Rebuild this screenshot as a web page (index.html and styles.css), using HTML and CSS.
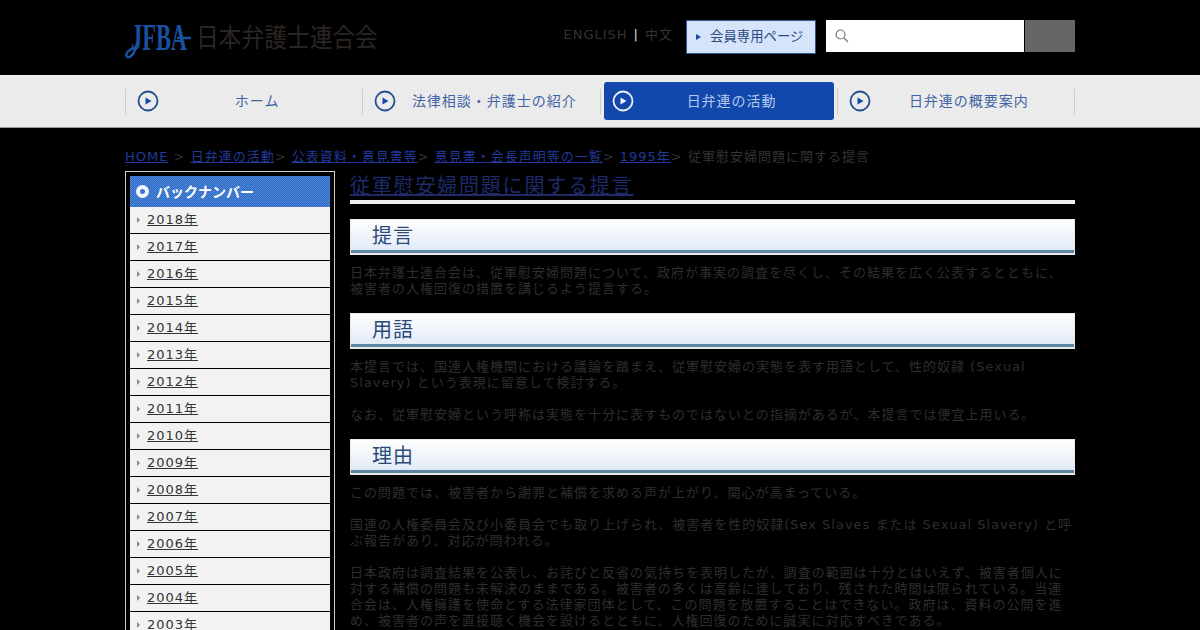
FILE: index.html
```html
<!DOCTYPE html>
<html lang="ja">
<head>
    <meta charset="UTF-8">
    <meta name="viewport" content="width=device-width, initial-scale=1.0">
    <title>従軍慰安婦問題に関する提言 | 日本弁護士連合会</title>
    <link rel="stylesheet" href="styles.css">
</head>
<body>
    <header class="top">
        <div class="wrap top-inner">
            <a class="logo" href="#">
                <svg width="254" height="40" viewBox="0 0 254 40">
                    <path class="logo-tail" d="M13 20 L10 29 C8 35 3 38 1.500 35 C0 32 5 28 11 26"/>
                    <path class="logo-bar" d="M52 17 L66 17"/>
                    <text class="logo-mark" transform="translate(6 29) scale(.59 1)">JFBA</text>
                    <text class="logo-name" transform="translate(71 26) scale(.875 1)">日本弁護士連合会</text>
                </svg>
            </a>
            <div class="lang"><a href="#">ENGLISH</a><span class="lang-sep">|</span><a href="#">中文</a></div>
            <a class="member" href="#"><span class="member-arrow"></span>会員専用ページ</a>
            <form class="search">
                <div class="search-box">
                    <svg width="14" height="14" viewBox="0 0 14 14">
                        <circle class="search-icon" cx="5.500" cy="5.500" r="4.500"/>
                        <path class="search-icon" d="M9 9 L13 13"/>
                    </svg>
                </div>
                <button class="search-btn" type="button"></button>
            </form>
        </div>
    </header>

    <nav class="gnav">
        <div class="wrap gnav-row">
            <span class="gnav-sep"></span>
            <a class="gnav-item" href="#">
                <svg class="play" width="22" height="22" viewBox="0 0 22 22"><circle cx="11" cy="11" r="9.500"/><path d="M8.500 7.500 L14.500 11 L8.500 14.500 Z"/></svg>
                <span class="gnav-text">ホーム</span>
            </a>
            <span class="gnav-sep"></span>
            <a class="gnav-item" href="#">
                <svg class="play" width="22" height="22" viewBox="0 0 22 22"><circle cx="11" cy="11" r="9.500"/><path d="M8.500 7.500 L14.500 11 L8.500 14.500 Z"/></svg>
                <span class="gnav-text">法律相談・弁護士の紹介</span>
            </a>
            <span class="gnav-sep"></span>
            <a class="gnav-item active" href="#">
                <svg class="play" width="22" height="22" viewBox="0 0 22 22"><circle cx="11" cy="11" r="9.500"/><path d="M8.500 7.500 L14.500 11 L8.500 14.500 Z"/></svg>
                <span class="gnav-text">日弁連の活動</span>
            </a>
            <span class="gnav-sep"></span>
            <a class="gnav-item" href="#">
                <svg class="play" width="22" height="22" viewBox="0 0 22 22"><circle cx="11" cy="11" r="9.500"/><path d="M8.500 7.500 L14.500 11 L8.500 14.500 Z"/></svg>
                <span class="gnav-text">日弁連の概要案内</span>
            </a>
            <span class="gnav-sep"></span>
        </div>
    </nav>

    <div class="wrap">
        <div class="crumbs">
            <a href="#">HOME</a> &gt; <a href="#">日弁連の活動</a>&gt; <a href="#">公表資料・意見書等</a>&gt; <a href="#">意見書・会長声明等の一覧</a>&gt; <a href="#">1995年</a>&gt; 従軍慰安婦問題に関する提言
        </div>

        <div class="columns">
            <aside class="side">
                <div class="side-head"><span class="side-ring"></span>バックナンバー</div>
                <ul class="side-list">
                    <li><a href="#">2018年</a></li>
                    <li><a href="#">2017年</a></li>
                    <li><a href="#">2016年</a></li>
                    <li><a href="#">2015年</a></li>
                    <li><a href="#">2014年</a></li>
                    <li><a href="#">2013年</a></li>
                    <li><a href="#">2012年</a></li>
                    <li><a href="#">2011年</a></li>
                    <li><a href="#">2010年</a></li>
                    <li><a href="#">2009年</a></li>
                    <li><a href="#">2008年</a></li>
                    <li><a href="#">2007年</a></li>
                    <li><a href="#">2006年</a></li>
                    <li><a href="#">2005年</a></li>
                    <li><a href="#">2004年</a></li>
                    <li><a href="#">2003年</a></li>
                    <li><a href="#">2002年</a></li>
                </ul>
            </aside>

            <main class="content">
                <h1 class="page-title"><span>従軍慰安婦問題に関する提言</span></h1>

                <h2 class="sec-title">提言</h2>
                <p>日本弁護士連合会は、従軍慰安婦問題について、政府が事実の調査を尽くし、その結果を広く公表するとともに、被害者の人権回復の措置を講じるよう提言する。</p>

                <h2 class="sec-title">用語</h2>
                <p>本提言では、国連人権機関における議論を踏まえ、従軍慰安婦の実態を表す用語として、性的奴隷 (Sexual Slavery) という表現に留意して検討する。</p>
                <p>なお、従軍慰安婦という呼称は実態を十分に表すものではないとの指摘があるが、本提言では便宜上用いる。</p>

                <h2 class="sec-title">理由</h2>
                <p>この問題では、被害者から謝罪と補償を求める声が上がり、関心が高まっている。</p>
                <p>国連の人権委員会及び小委員会でも取り上げられ、被害者を性的奴隷(Sex Slaves または Sexual Slavery) と呼ぶ報告があり、対応が問われる。</p>
                <p>日本政府は調査結果を公表し、お詫びと反省の気持ちを表明したが、調査の範囲は十分とはいえず、被害者個人に対する補償の問題も未解決のままである。被害者の多くは高齢に達しており、残された時間は限られている。当連合会は、人権擁護を使命とする法律家団体として、この問題を放置することはできない。政府は、資料の公開を進め、被害者の声を直接聴く機会を設けるとともに、人権回復のために誠実に対応すべきである。</p>
            </main>
        </div>
    </div>
</body>
</html>
```

FILE: styles.css
```css
html, body {
    height: 100%;
    overflow: hidden;
}
body {
    margin: 0;
    background-color: #000;
    color: #2e2e2e;
    font-family: "DejaVu Sans", "Noto Sans CJK JP", sans-serif;
    font-size: 13px;
    line-height: 16px;
    letter-spacing: 1px;
}
a {
    color: inherit;
}
.wrap {
    width: 950px;
    margin: 0 auto;
}

/* header */
.top {
    height: 75px;
}
.top-inner {
    display: flex;
    align-items: flex-start;
    padding-top: 20px;
}
.logo {
    display: block;
    margin-top: 1px;
    margin-right: auto;
}
.logo-mark {
    fill: #1a50a0;
    font-family: "Liberation Serif", serif;
    font-weight: bold;
    font-size: 38px;
    letter-spacing: 0;
}
.logo-name {
    fill: #2b2522;
    font-family: "Noto Sans CJK JP", sans-serif;
    font-size: 26px;
    letter-spacing: 0;
}
.logo-tail, .logo-bar {
    fill: none;
    stroke: #1a50a0;
    stroke-width: 2.500;
}
.lang {
    line-height: 30px;
    margin-right: 13px;
    color: #333;
}
.lang a {
    text-decoration: none;
}
.lang-sep {
    color: #ddd;
    margin: 0 6px;
}
.member {
    display: flex;
    align-items: center;
    box-sizing: border-box;
    width: 130px;
    height: 34px;
    padding-left: 9px;
    margin-right: 10px;
    background-color: #d6e4fb;
    border: 1px solid #2f5590;
    color: #2a4a80;
    font-size: 13.400px;
    letter-spacing: 0;
    text-decoration: none;
}
.member-arrow {
    width: 0;
    height: 0;
    margin-right: 9px;
    border-left: 5px solid #1a4ba0;
    border-top: 3px solid transparent;
    border-bottom: 3px solid transparent;
}
.search {
    display: flex;
    margin: 0;
}
.search-box {
    display: flex;
    align-items: center;
    box-sizing: border-box;
    width: 198px;
    height: 32px;
    padding-left: 9px;
    background-color: #fff;
}
.search-icon {
    fill: none;
    stroke: #777;
    stroke-width: 1.200;
}
.search-btn {
    width: 50px;
    height: 32px;
    margin-left: 1px;
    padding: 0;
    border: none;
    background-color: #666;
}

/* global nav */
.gnav {
    border-top: 1px solid #f4f4f4;
    border-bottom: 1px solid #999;
    background-color: #ebebeb;
}
.gnav-row {
    display: flex;
    align-items: center;
    gap: 3px;
    height: 50px;
    padding-bottom: 1px;
}
.gnav-sep {
    width: 1px;
    height: 25px;
    background-color: #ccc;
}
.gnav-item {
    flex: 1;
    display: flex;
    align-items: center;
    height: 38px;
    padding-left: 8px;
    padding-right: 4px;
    border-radius: 3px;
    color: #3f63a6;
    font-size: 14px;
    text-decoration: none;
}
.gnav-text {
    flex: 1;
    text-align: center;
}
.play circle {
    fill: none;
    stroke: #24508f;
    stroke-width: 1.800;
}
.play path {
    fill: #1248ac;
}
.gnav-item.active {
    background-color: #1248ac;
    color: #b4c9f0;
}
.active .play circle {
    stroke: #eef2fa;
}
.active .play path {
    fill: #eef2fa;
}

/* breadcrumb */
.crumbs {
    padding-top: 21px;
    margin-bottom: 6px;
    color: #333;
    white-space: nowrap;
}
.crumbs a {
    color: #22399a;
}

/* columns */
.columns {
    display: flex;
    gap: 15px;
    align-items: flex-start;
}
.side {
    box-sizing: border-box;
    width: 210px;
    flex-shrink: 0;
    padding: 4px;
    border: 1px solid #ccc;
}
.side-head {
    display: flex;
    align-items: center;
    height: 31px;
    padding-left: 6px;
    background: repeating-conic-gradient(#2f6bc4 0 25%, #4c86d9 0 50%) 0 0 / 2px 2px;
    color: #fff;
    font-size: 14px;
    font-weight: bold;
    letter-spacing: 0;
}
.side-ring {
    box-sizing: border-box;
    width: 13px;
    height: 13px;
    margin-right: 7px;
    border: 4px solid #f2f5fb;
    border-radius: 50%;
}
.side-list {
    margin: 0;
    padding: 0;
    list-style: none;
}
.side-list li {
    display: flex;
    align-items: center;
    height: 26px;
    margin-bottom: 1px;
    padding-left: 7px;
    background-color: #f2f2f2;
    color: #333;
}
.side-list li::before {
    content: "";
    width: 0;
    height: 0;
    margin-right: 7px;
    border-left: 3px solid #888;
    border-top: 3px solid transparent;
    border-bottom: 3px solid transparent;
}

/* content */
.content {
    flex: 1;
    min-width: 0;
}
.page-title {
    box-sizing: border-box;
    height: 33px;
    margin: 0 0 15px;
    padding-top: 2px;
    border-bottom: 4px solid;
    border-image: linear-gradient(#555 25%, #eee 25%) 1;
    color: #1e2a6a;
    font-size: 20px;
    line-height: 26px;
    font-weight: normal;
    letter-spacing: 1.800px;
    text-decoration: underline;
}
.sec-title {
    box-sizing: border-box;
    height: 36px;
    margin: 0 0 10px;
    padding-left: 21px;
    border: 1px solid #e8e8e8;
    border-bottom-width: 2px;
    background: linear-gradient(#fff, #dfe8f6);
    box-shadow: inset 0 -3px 0 #5d86a3;
    color: #2a4a7a;
    font-size: 20px;
    line-height: 32px;
    font-weight: normal;
}
.content p {
    margin: 0 0 16px;
}
```
